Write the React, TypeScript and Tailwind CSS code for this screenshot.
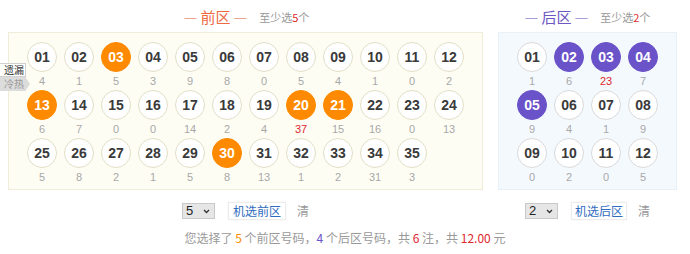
import React from "react";

type Ball = { n: string; c: number; sel?: boolean; hot?: boolean };

const front: Ball[] = [
  { n: "01", c: 4 }, { n: "02", c: 1 }, { n: "03", c: 5, sel: true }, { n: "04", c: 3 },
  { n: "05", c: 9 }, { n: "06", c: 8 }, { n: "07", c: 0 }, { n: "08", c: 5 },
  { n: "09", c: 4 }, { n: "10", c: 1 }, { n: "11", c: 0 }, { n: "12", c: 2 },
  { n: "13", c: 6, sel: true }, { n: "14", c: 7 }, { n: "15", c: 0 }, { n: "16", c: 0 },
  { n: "17", c: 14 }, { n: "18", c: 2 }, { n: "19", c: 4 }, { n: "20", c: 37, sel: true, hot: true },
  { n: "21", c: 15, sel: true }, { n: "22", c: 16 }, { n: "23", c: 0 }, { n: "24", c: 13 },
  { n: "25", c: 5 }, { n: "26", c: 8 }, { n: "27", c: 2 }, { n: "28", c: 1 },
  { n: "29", c: 5 }, { n: "30", c: 8, sel: true }, { n: "31", c: 13 }, { n: "32", c: 1 },
  { n: "33", c: 2 }, { n: "34", c: 31 }, { n: "35", c: 3 },
];

const back: Ball[] = [
  { n: "01", c: 1 }, { n: "02", c: 6, sel: true }, { n: "03", c: 23, sel: true, hot: true }, { n: "04", c: 7, sel: true },
  { n: "05", c: 9, sel: true }, { n: "06", c: 4 }, { n: "07", c: 1 }, { n: "08", c: 9 },
  { n: "09", c: 0 }, { n: "10", c: 2 }, { n: "11", c: 0 }, { n: "12", c: 5 },
];

const cjk = { fontFamily: '"Noto Sans CJK SC", "Liberation Sans", sans-serif' };
const arial = { fontFamily: '"Liberation Sans", Arial, sans-serif' };

function BallCell({ b, kind }: { b: Ball; kind: "front" | "back" }) {
  const selCls =
    kind === "front"
      ? "bg-[#ff8a00] border-[#ff8a00] text-white"
      : "bg-[#6a52c8] border-[#6a52c8] text-white";
  const normCls =
    kind === "front"
      ? "bg-white border-[#e2dfc6] text-[#3a3a3a]"
      : "bg-white border-[#d9d9d9] text-[#3a3a3a]";
  return (
    <div className="flex flex-col items-center w-[30px]">
      <div
        className={`w-[30px] h-[30px] rounded-full border flex items-center justify-center text-[14px] font-bold ${b.sel ? selCls : normCls}`}
        style={arial}
      >
        {b.n}
      </div>
      <div
        className={`h-[18px] leading-[18px] text-[11px] ${b.hot ? "text-[#e0282e]" : "text-[#a8a8a8]"}`}
        style={arial}
      >
        {b.c}
      </div>
    </div>
  );
}

function Select({ v }: { v: string }) {
  return (
    <div
      className="w-[33px] h-[16px] bg-[#e6e6e6] border border-[#c9c9c9] flex items-center justify-between pl-[3px] pr-[4px] text-[13px] text-[#222]"
      style={arial}
    >
      <span>{v}</span>
      <svg width="7" height="5" viewBox="0 0 7 5">
        <path d="M1 1 L3.5 3.5 L6 1" stroke="#333" strokeWidth="1.3" fill="none" />
      </svg>
    </div>
  );
}

function Controls({ v, label, btnW }: { v: string; label: string; btnW: string }) {
  return (
    <div className="flex items-center justify-center mt-[12px] h-[18px]" style={cjk}>
      <Select v={v} />
      <div
        className={`ml-[13px] h-[18px] ${btnW} border border-[#ececec] bg-white flex items-center justify-center text-[12px] text-[#2f6cc0] shadow-[0_0_2px_rgba(0,0,0,0.05)]`}
      >
        {label}
      </div>
      <div className="ml-[11px] text-[12px] text-[#999]">清</div>
    </div>
  );
}

export default function App() {
  return (
    <div className="w-[690px] h-[254px] bg-white relative overflow-hidden" style={cjk}>
      <div className="flex pl-[8px]">
        {/* Front */}
        <div className="w-[475px] flex flex-col">
          <div className="h-[32px] flex items-center justify-center pt-[2px] pl-[2px]">
            <span className="text-[15px] text-[#ec6a3f]">
              <span className="text-[#e9a58f]">—</span> 前区 <span className="text-[#e9a58f]">—</span>
            </span>
            <span className="ml-[12px] text-[11px] text-[#999]">
              至少选<span className="text-[#e0282e]">5</span>个
            </span>
          </div>
          <div className="border border-[#efedd9] bg-[#fdfdf4] pt-[9px] pb-[3px] flex justify-center">
            <div className="grid grid-cols-12 gap-x-[7px] w-[437px]">
              {front.map((b) => (
                <BallCell key={b.n} b={b} kind="front" />
              ))}
            </div>
          </div>
          <Controls v="5" label="机选前区" btnW="w-[58px]" />
        </div>

        {/* Back */}
        <div className="w-[179px] ml-[15px] flex flex-col">
          <div className="h-[32px] flex items-center justify-center pt-[2px]">
            <span className="text-[15px] text-[#6c57c4]">
              <span className="text-[#a89bd8]">—</span> 后区 <span className="text-[#a89bd8]">—</span>
            </span>
            <span className="ml-[12px] text-[11px] text-[#999]">
              至少选<span className="text-[#e0282e]">2</span>个
            </span>
          </div>
          <div className="border border-[#e8f0f8] bg-[#f4f9fe] pt-[9px] pb-[3px] flex justify-center">
            <div className="grid grid-cols-4 gap-x-[7px] w-[141px]">
              {back.map((b) => (
                <BallCell key={b.n} b={b} kind="back" />
              ))}
            </div>
          </div>
          <Controls v="2" label="机选后区" btnW="w-[56px]" />
        </div>
      </div>

      <div className="flex justify-center mt-[9px] text-[12px] text-[#999]">
        <span>
          您选择了 <span className="text-[#ff8a00]">5</span> 个前区号码，
          <span className="text-[#6a52c8]">4</span> 个后区号码，共{" "}
          <span className="text-[#e0282e]">6</span> 注，共{" "}
          <span className="text-[#e0282e]">12.00</span> 元
        </span>
      </div>

      {/* side tabs */}
      <div className="absolute left-[-8px] top-[63px] flex flex-col text-[10px]">
        <div className="w-[34px] h-[14px] bg-white shadow-[inset_0_0_0_1px_#d0d0d0] text-[#333] flex items-center justify-end pr-[2px]">
          <span className="leading-[12px]">遗漏</span>
        </div>
        <div className="relative w-[34px] h-[14px] bg-[#dcdcdc] text-[#999] flex items-center justify-end pr-[2px]">
          <span className="leading-[12px]">冷热</span>
          <div className="absolute right-[-4px] top-[1px] w-0 h-0 border-t-[6px] border-b-[6px] border-l-[4px] border-t-transparent border-b-transparent border-l-[#dcdcdc]" />
        </div>
      </div>
    </div>
  );
}
